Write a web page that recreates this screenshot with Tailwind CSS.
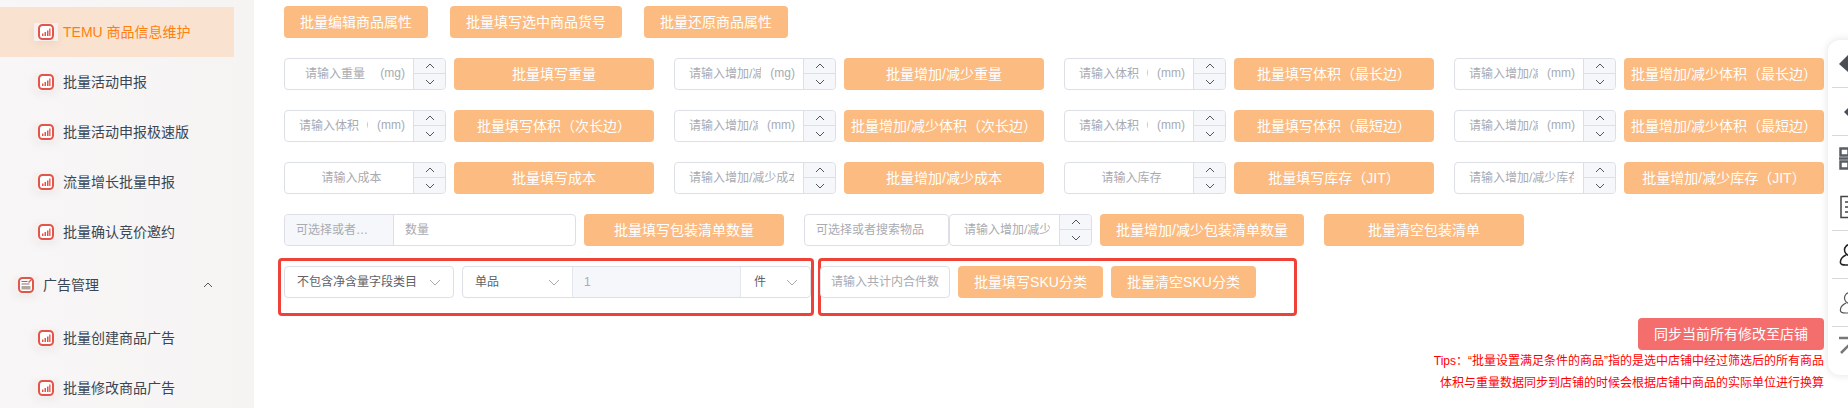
<!DOCTYPE html>
<html lang="en">
<head>
    <meta charset="UTF-8">
    <title>TEMU 商品信息维护</title>
    <script src="https://cdn.jsdelivr.net/npm/@tailwindcss/browser@4"></script>
</head>
<body class="bg-white font-['Liberation_Sans','Noto_Sans_CJK_SC',sans-serif] text-sm">
    <div class="relative flex w-[1848px] h-[408px] overflow-hidden">

        <!-- Sidebar -->
        <aside class="w-[254px] h-[408px] shrink-0 pt-[7px] bg-gradient-to-r from-[#f8f6f6] to-[#f6f4f3] text-[#3b4654]" id="menu"></aside>

        <!-- Main -->
        <main class="w-[1540px] ml-[30px] pt-[6px] flex flex-col">
            <div class="flex gap-[22px] text-white">
                <button class="w-[144px] h-8 rounded bg-[#fcbb80]">批量编辑商品属性</button>
                <button class="w-[172px] h-8 rounded bg-[#fcbb80]">批量填写选中商品货号</button>
                <button class="w-[144px] h-8 rounded bg-[#fcbb80]">批量还原商品属性</button>
            </div>

            <div class="mt-5 grid grid-cols-[370px_370px_370px_370px] gap-x-5 gap-y-5" id="batch"></div>

            <!-- Packing list -->
            <div class="mt-5 flex text-xs">
                <div class="w-[292px] h-8 flex rounded border border-[#dcdfe6]">
                    <div class="w-[109px] flex items-center pl-[11px] bg-[#f5f7fa] border-r border-[#dcdfe6] text-[#a8abb2] rounded-l">可选择或者…</div>
                    <input class="flex-1 min-w-0 pl-[11px] outline-none placeholder:text-[#a8abb2]" placeholder="数量">
                </div>
                <button class="w-[200px] h-8 ml-2 rounded bg-[#fcbb80] text-white text-sm">批量填写包装清单数量</button>
                <div class="w-[145px] h-8 ml-5 flex items-center pl-[11px] rounded border border-[#dcdfe6] text-[#a8abb2]">可选择或者搜索物品</div>
                <div class="relative w-[143px] h-8 flex rounded border border-[#dcdfe6]" id="packNum"></div>
                <button class="w-[204px] h-8 ml-2 rounded bg-[#fcbb80] text-white text-sm">批量增加/减少包装清单数量</button>
                <button class="w-[200px] h-8 ml-5 rounded bg-[#fcbb80] text-white text-sm">批量清空包装清单</button>
            </div>

            <!-- SKU -->
            <div class="mt-3 ml-[-6px] flex">
                <div class="w-[536px] h-[58px] pt-[5px] pl-[3px] flex items-start gap-2 rounded-sm border-[3px] border-[#ee4238] text-xs">
                    <div class="w-[170px] h-8 flex items-center justify-between pl-3 pr-3 rounded border border-[#dcdfe6] text-[#606266]">
                        不包含净含量字段类目
                        <svg class="w-3 h-3 text-[#a8abb2]" viewBox="0 0 12 12" fill="none" stroke="currentColor"><path d="M1 4l5 5 5-5"/></svg>
                    </div>
                    <div class="w-[349px] h-8 flex rounded border border-[#dcdfe6] text-[#606266]">
                        <div class="w-[110px] flex items-center justify-between pl-3 pr-3 border-r border-[#e4e7ed]">
                            单品
                            <svg class="w-3 h-3 text-[#a8abb2]" viewBox="0 0 12 12" fill="none" stroke="currentColor"><path d="M1 4l5 5 5-5"/></svg>
                        </div>
                        <div class="w-[168px] flex items-center pl-[11px] bg-[#f5f7fa] border-r border-[#e4e7ed] text-[#a8abb2]">1</div>
                        <div class="flex-1 flex items-center justify-between pl-[13px] pr-3">
                            件
                            <svg class="w-3 h-3 text-[#a8abb2]" viewBox="0 0 12 12" fill="none" stroke="currentColor"><path d="M1 4l5 5 5-5"/></svg>
                        </div>
                    </div>
                </div>
                <div class="w-[479px] h-[58px] ml-1 pt-[5px] flex items-start rounded-sm border-[3px] border-[#ee4238]">
                    <input class="w-[130px] h-8 ml-[-1px] px-[7px] text-xs text-center rounded border border-[#dcdfe6] outline-none placeholder:text-[#a8abb2]" placeholder="请输入共计内合件数">
                    <button class="w-[145px] h-8 ml-2 rounded bg-[#fcbb80] text-white">批量填写SKU分类</button>
                    <button class="w-[145px] h-8 ml-2 rounded bg-[#fcbb80] text-white">批量清空SKU分类</button>
                </div>
            </div>

            <!-- Sync -->
            <button class="w-[186px] h-8 mt-[2px] self-end rounded bg-[#f56e6e] text-white">同步当前所有修改至店铺</button>
            <p class="text-xs leading-[22px] text-right text-[#ff0000]">Tips：“批量设置满足条件的商品”指的是选中店铺中经过筛选后的所有商品</p>
            <p class="text-xs leading-[22px] text-right text-[#ff0000]">体积与重量数据同步到店铺的时候会根据店铺中商品的实际单位进行换算</p>
        </main>

        <!-- Floating tool rail -->
        <div class="absolute left-[1828px] top-[40px] w-[60px] h-[335px] flex flex-col rounded-l-xl bg-white shadow-[0_0_8px_rgba(0,0,0,0.12)]">
            <div class="h-12 ml-1 pl-[7px] flex items-center border-b border-[#d8d8d8]">
                <svg class="w-[22px] h-[20px] text-[#4b4f55]" viewBox="0 0 22 20" fill="currentColor"><path d="M0 10 9 1c3-1.200 6-.5 9 2l-3 15c-2 1-4 1-6 0z"/></svg>
            </div>
            <div class="h-12 ml-1 pl-3 flex items-center border-b border-[#d8d8d8]">
                <svg class="w-[16px] h-[10px] text-[#4b4f55]" viewBox="0 0 16 10" fill="currentColor"><path d="M0 5 5 0h8v10H5z"/></svg>
            </div>
            <div class="h-[95px] ml-1 pl-[7px] pt-[11px] border-b border-[#d8d8d8]">
                <svg class="w-[24px] h-[23px] text-[#5a5e64]" viewBox="0 0 24 23" fill="none" stroke="currentColor" stroke-width="2.500"><path d="M1.500 1.500h8v7h-8zM13 1.500h8v7h-8zM1.500 14.500h8v7h-8zM13 14.500h8v7h-8zM0 11.500h24"/></svg>
                <svg class="mt-[25px] w-[24px] h-[24px] text-[#444]" viewBox="0 0 24 24" fill="none" stroke="currentColor" stroke-width="1.500"><path d="M2 1.500h18v21H2zM6 7h12M6 12h12M6 17h8"/></svg>
            </div>
            <div class="h-12 ml-1 pl-[7px] flex items-center border-b border-[#d8d8d8]">
                <svg class="w-[24px] h-[24px] text-[#222]" viewBox="0 0 24 24" fill="none" stroke="currentColor" stroke-width="1.500"><circle cx="11" cy="7" r="5.500"/><path d="M7 12C3 14 1 17 1.500 20c.5 2 3 2 5 2h10c3 0 5-1 6-2"/></svg>
            </div>
            <div class="h-12 ml-1 pl-[7px] flex items-center border-b border-[#d8d8d8]">
                <svg class="w-[24px] h-[24px] text-[#555]" viewBox="0 0 24 24" fill="none" stroke="currentColor" stroke-width="1.200"><circle cx="11" cy="7" r="5.500"/><path d="M7 12C3 14 1 17 1.500 20c.5 2 3 2 5 2h10c3 0 5-1 6-2"/></svg>
            </div>
            <div class="h-12 ml-1 pl-[7px] pt-[9px]">
                <svg class="w-[24px] h-[18px] text-[#777]" viewBox="0 0 24 18" fill="none" stroke="currentColor" stroke-width="2.500"><path d="M0 2h24M2 17 14 5"/></svg>
            </div>
        </div>
    </div>

    <script>
        const chartIcon = `<span class="w-6 h-[18px] flex items-center justify-center bg-[#f6f1ee] shadow-[0_3px_10px_rgba(0,0,0,0.05)]">
            <svg class="w-4 h-4" viewBox="0 0 16 16"><rect x="1" y="1" width="14" height="14" rx="3.500" fill="#fff" stroke="#e0554c" stroke-width="2"/><path d="M4 9.500h1.500V12H4zM6.500 8H8v4H6.500zM9 6.500h1.500V12H9zM11.200 4.500h1.300V12h-1.300z" fill="#ea4e44"/></svg>
        </span>`;
        const adIcon = `<span class="w-6 h-[18px] flex items-center justify-center bg-[#f6f1ee] shadow-[0_3px_10px_rgba(0,0,0,0.05)]">
            <svg class="w-4 h-4" viewBox="0 0 16 16"><rect x="1" y="1" width="14" height="14" rx="3.500" fill="#fff" stroke="#e0554c" stroke-width="2"/><path d="M3.500 4h6v1h-6zM3.500 6.500h8v1h-8z" fill="#777"/><path d="M3.500 9h9v3.500h-9z" fill="#b5a69d"/><path d="M10 5l3-3 1 1-3 3z" fill="#dd5a52"/></svg>
        </span>`;

        function menuItem(label, active) {
            return `<div class="${active ? "w-[234px] bg-[#f9e2cf] text-[#ff7f0e]" : ""} h-[50px] pl-[34px] flex items-center gap-[5px]">${chartIcon}<span>${label}</span></div>`;
        }

        document.getElementById("menu").innerHTML =
            menuItem("TEMU 商品信息维护", true) +
            ["批量活动申报", "批量活动申报极速版", "流量增长批量申报", "批量确认竞价邀约"].map(l => menuItem(l)).join("") +
            `<div class="w-[234px] h-[56px] pl-[14px] flex items-center gap-[5px]">${adIcon}<span>广告管理</span>
                <svg class="w-[10px] h-[10px] ml-auto mr-[21px]" viewBox="0 0 10 10" fill="none" stroke="#555"><path d="M1 7l4-4 4 4"/></svg></div>` +
            ["批量创建商品广告", "批量修改商品广告"].map(l => menuItem(l)).join("");

        const stepper = `<div class="w-8 flex flex-col bg-[#f5f7fa] border-l border-[#dcdfe6] rounded-r">
            <span class="h-[15px] flex items-center justify-center border-b border-[#dcdfe6]"><svg class="w-[10px] h-[10px]" viewBox="0 0 10 10" fill="none" stroke="#555"><path d="M1 7l4-4 4 4"/></svg></span>
            <span class="flex-1 flex items-center justify-center"><svg class="w-[10px] h-[10px]" viewBox="0 0 10 10" fill="none" stroke="#555"><path d="M1 3l4 4 4-4"/></svg></span>
        </div>`;

        function numInput(placeholder, unit) {
            const pad = unit === "(mg)" ? "pr-[42px]" : unit === "(mm)" ? "pr-[45px]" : "pr-[9px]";
            const suffix = unit ? `<span class="absolute right-[8px] top-[6px] text-[#a8abb2]">${unit}</span>` : "";
            return `<div class="relative flex-1 min-w-0 flex">
                <input class="w-full min-w-0 pl-[14px] ${pad} text-center outline-none placeholder:text-[#a8abb2]" placeholder="${placeholder}">${suffix}
            </div>${stepper}`;
        }

        const rows = [
            ["请输入重量", "(mg)", "批量填写重量"],
            ["请输入增加/减少重量（mg）", "(mg)", "批量增加/减少重量"],
            ["请输入体积（mm）", "(mm)", "批量填写体积（最长边）"],
            ["请输入增加/减少体积（mm）", "(mm)", "批量增加/减少体积（最长边）"],
            ["请输入体积（mm）", "(mm)", "批量填写体积（次长边）"],
            ["请输入增加/减少体积（mm）", "(mm)", "批量增加/减少体积（次长边）"],
            ["请输入体积（mm）", "(mm)", "批量填写体积（最短边）"],
            ["请输入增加/减少体积（mm）", "(mm)", "批量增加/减少体积（最短边）"],
            ["请输入成本", "", "批量填写成本"],
            ["请输入增加/减少成本", "", "批量增加/减少成本"],
            ["请输入库存", "", "批量填写库存（JIT）"],
            ["请输入增加/减少库存（JIT）", "", "批量增加/减少库存（JIT）"],
        ];

        document.getElementById("batch").innerHTML = rows.map(([placeholder, unit, label]) => `
            <div class="flex gap-2">
                <div class="w-[162px] h-8 flex rounded border border-[#dcdfe6] text-xs">${numInput(placeholder, unit)}</div>
                <button class="w-[200px] h-8 rounded bg-[#fcbb80] text-white whitespace-nowrap">${label}</button>
            </div>`).join("");

        document.getElementById("packNum").innerHTML = numInput("请输入增加/减少包装清单数量", "");
    </script>
</body>
</html>
